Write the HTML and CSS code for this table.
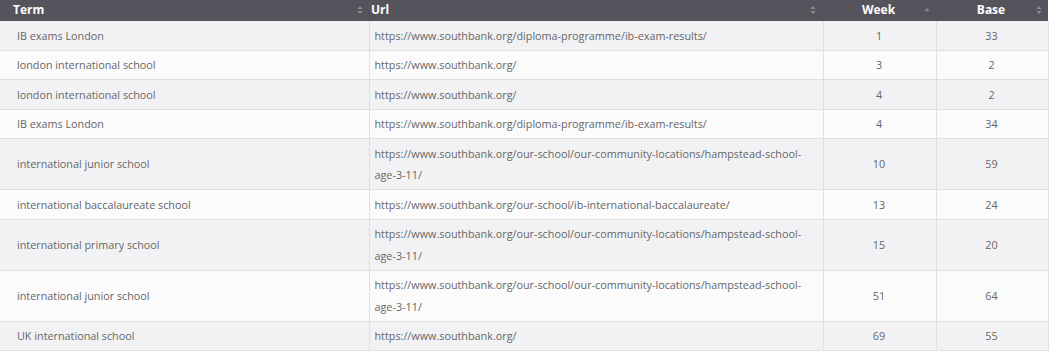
FILE: index.html
```html
<!DOCTYPE html>
<html>
<head>
<meta charset="utf-8">
<link rel="stylesheet" href="styles.css">
</head>
<body>
<table class="grid">
  <colgroup>
    <col class="c-term"><col class="c-url"><col class="c-week"><col class="c-base">
  </colgroup>
  <thead>
    <tr>
      <th class="h-term"><span>Term</span><svg class="sort" viewBox="0 0 6 10"><path d="M3 1 L5.5 4 H0.5 Z M3 9 L5.5 6 H0.5 Z"/></svg></th>
      <th class="h-url"><span>Url</span><svg class="sort" viewBox="0 0 6 10"><path d="M3 1 L5.5 4 H0.5 Z M3 9 L5.5 6 H0.5 Z"/></svg></th>
      <th class="h-num"><span>Week</span><svg class="sort asc" viewBox="0 0 6 10"><path d="M3 3 L5.5 6 H0.5 Z"/></svg></th>
      <th class="h-num"><span>Base</span><svg class="sort" viewBox="0 0 6 10"><path d="M3 1 L5.5 4 H0.5 Z M3 9 L5.5 6 H0.5 Z"/></svg></th>
    </tr>
  </thead>
  <tbody>
    <tr><td>IB exams London</td><td>https://www.southbank.org/diploma-programme/ib-exam-results/</td><td class="num">1</td><td class="num">33</td></tr>
    <tr><td>london international school</td><td>https://www.southbank.org/</td><td class="num">3</td><td class="num">2</td></tr>
    <tr><td>london international school</td><td>https://www.southbank.org/</td><td class="num">4</td><td class="num">2</td></tr>
    <tr><td>IB exams London</td><td>https://www.southbank.org/diploma-programme/ib-exam-results/</td><td class="num">4</td><td class="num">34</td></tr>
    <tr><td>international junior school</td><td>https://www.southbank.org/our-school/our-community-locations/hampstead-school-age-3-11/</td><td class="num">10</td><td class="num">59</td></tr>
    <tr><td>international baccalaureate school</td><td>https://www.southbank.org/our-school/ib-international-baccalaureate/</td><td class="num">13</td><td class="num">24</td></tr>
    <tr><td>international primary school</td><td>https://www.southbank.org/our-school/our-community-locations/hampstead-school-age-3-11/</td><td class="num">15</td><td class="num">20</td></tr>
    <tr><td>international junior school</td><td>https://www.southbank.org/our-school/our-community-locations/hampstead-school-age-3-11/</td><td class="num">51</td><td class="num">64</td></tr>
    <tr><td>UK international school</td><td>https://www.southbank.org/</td><td class="num">69</td><td class="num">55</td></tr>
  </tbody>
</table>
</body>
</html>
```
FILE: styles.css
```css
html, body {
  margin: 0;
  padding: 0;
  background: #ffffff;
}
body {
  font-family: "Open Sans", "Liberation Sans", sans-serif;
  font-size: 10.8px;
  color: #666666;
}
.grid {
  width: 1048px;
  border-collapse: collapse;
  table-layout: fixed;
}
.c-term { width: 369px; }
.c-url { width: 454px; }
.c-week { width: 113px; }
.c-base { width: 112px; }

.grid thead tr {
  background: #55545c;
  height: 21px;
}
.grid th {
  position: relative;
  height: 21px;
  padding: 0;
  color: #ffffff;
  font-size: 12px;
  font-weight: 700;
  line-height: 20px;
  text-align: left;
  vertical-align: top;
}
.grid th span {
  display: block;
}
.h-term span { padding-left: 13px; }
.h-url span { padding-left: 2px; }
.h-num span { text-align: center; padding-right: 2px; }
.sort {
  position: absolute;
  right: 7px;
  top: 5px;
  width: 6px;
  height: 10px;
  fill: #8d8c93;
}
.h-term .sort { right: 6px; }
.h-num .sort { right: 6px; }

.grid td {
  padding: 3.5px 6px 3.5px 5px;
  line-height: 21.5px;
  border-bottom: 1px solid #e0e0e3;
  border-left: 1px solid #e0e0e3;
  vertical-align: middle;
  color: #666666;
}
.grid td:first-child {
  border-left: none;
  padding-left: 17px;
}
.grid td:last-child {
  border-right: 1px solid #e0e0e3;
}
.grid tbody tr:nth-child(odd) { background: #f2f2f4; }
.grid tbody tr:nth-child(even) { background: #fbfbfc; }
.grid td.num {
  text-align: center;
}
```
